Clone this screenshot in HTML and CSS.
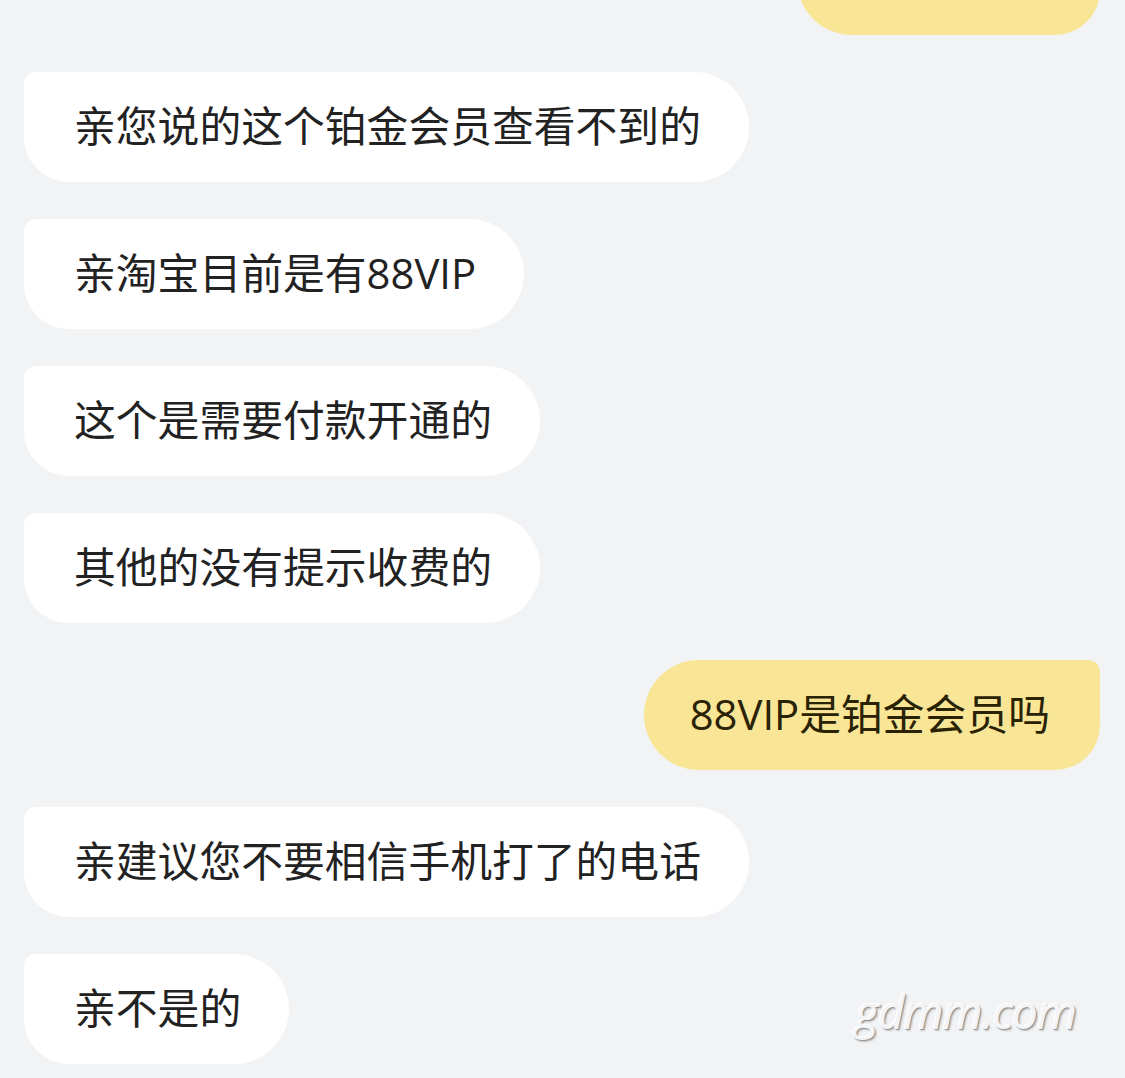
FILE: index.html
```html
<!DOCTYPE html>
<html lang="zh-CN">
<head>
<meta charset="utf-8">
<link rel="stylesheet" href="styles.css">
</head>
<body>
<div class="chat">
  <div class="msg out first"><div class="bubble"></div></div>
  <div class="msg in"><div class="bubble">亲您说的这个铂金会员查看不到的</div></div>
  <div class="msg in"><div class="bubble">亲淘宝目前是有88VIP</div></div>
  <div class="msg in"><div class="bubble">这个是需要付款开通的</div></div>
  <div class="msg in"><div class="bubble">其他的没有提示收费的</div></div>
  <div class="msg out"><div class="bubble">88VIP是铂金会员吗</div></div>
  <div class="msg in"><div class="bubble">亲建议您不要相信手机打了的电话</div></div>
  <div class="msg in"><div class="bubble">亲不是的</div></div>
</div>
<div class="watermark">gdmm.com</div>
</body>
</html>
```
FILE: styles.css
```css
html, body {
  margin: 0;
  padding: 0;
  background: #f2f3f5;
  overflow: hidden;
  height: 1078px;
}
.chat {
  display: flex;
  flex-direction: column;
  gap: 37px;
  padding: 0 25px 0 24px;
  margin-top: -75px;
  font-family: "Open Sans", "Noto Sans CJK SC", sans-serif;
}
.msg {
  display: flex;
}
.msg.in { justify-content: flex-start; }
.msg.out { justify-content: flex-end; }
.bubble {
  height: 110px;
  box-sizing: border-box;
  display: flex;
  align-items: center;
  padding: 0 48px 2px 50px;
  font-size: 41.8px;
  line-height: 1.3;
  color: #222222;
  white-space: nowrap;
}
.msg.in .bubble {
  background: #ffffff;
  border-radius: 12px 55px 55px 45px;
}
.msg.out .bubble {
  background: #f9e596;
  color: #2a2205;
  border-radius: 55px 12px 45px 55px;
  padding: 0 50px 2px 46px;
}
.msg.first .bubble {
  width: 303px;
}
.watermark {
  position: absolute;
  left: 855px;
  top: 980px;
  font-family: "Open Sans", sans-serif;
  font-style: italic;
  font-size: 46px;
  letter-spacing: -1px;
  color: #f4f4f6;
  text-shadow: -1px -1px 0 #ffffff, 1px 1px 1px #8f8f8f, 2px 2px 2px #c8c8c8;
}
```
